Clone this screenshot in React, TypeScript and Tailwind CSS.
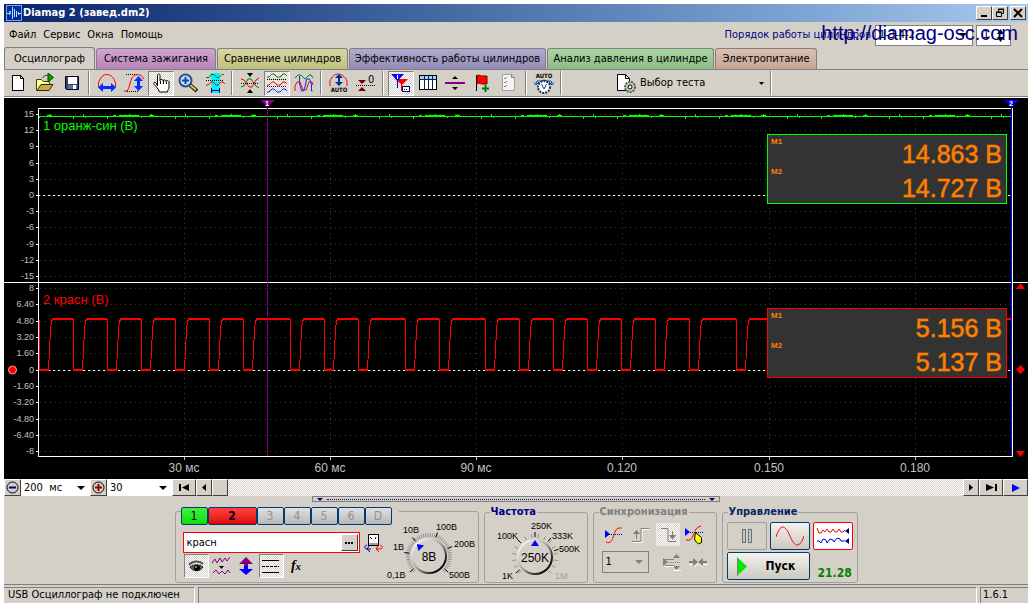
import type { ReactNode } from 'react';

const tabs = [
  { label: 'Осциллограф', style: 'h-[22px] w-[91px] bg-[#d4d0c8] border-b-[#d4d0c8]' },
  { label: 'Система зажигания', style: 'h-[21px] w-[120px] bg-linear-to-b from-[#d0a4d0] to-[#b885b8]' },
  { label: 'Сравнение цилиндров', style: 'h-[21px] w-[131px] bg-linear-to-b from-[#d6d6a6] to-[#c0c07c]' },
  { label: 'Эффективность работы цилиндров', style: 'h-[21px] w-[197px] bg-linear-to-b from-[#b0aacc] to-[#938cb8]' },
  { label: 'Анализ давления в цилиндре', style: 'h-[21px] w-[167px] bg-linear-to-b from-[#aad4a4] to-[#8abc84]' },
  { label: 'Электропитание', style: 'h-[21px] w-[102px] bg-linear-to-b from-[#dcc0b2] to-[#c6a492]' },
];

const pressed = 'bg-[repeating-conic-gradient(#fff_0_25%,#d4d0c8_0_50%)] bg-[length:2px_2px]';
const raised = 'bg-[#d4d0c8] border border-t-white border-l-white border-r-[#404040] border-b-[#404040]';

function Icon({ children, w = 20, h = 20 }: { children: ReactNode; w?: number; h?: number }) {
  return (
    <svg width={w} height={h} viewBox={`0 0 ${w} ${h}`} fill="none" className="shrink-0" aria-hidden="true">
      {children}
    </svg>
  );
}

function ToolButton({ label, active, children }: { label: string; active?: boolean; children: ReactNode }) {
  return (
    <button type="button" aria-label={label} aria-pressed={active} className="flex h-[26px] w-[27px] items-center justify-center">
      {active ? (
        <span className={`flex h-[25px] w-[26px] items-center justify-center border border-t-[#808080] border-l-[#808080] border-r-white border-b-white ${pressed}`}>
          {children}
        </span>
      ) : (
        children
      )}
    </button>
  );
}

function Separator() {
  return (
    <div className="flex w-2 justify-center">
      <div className="h-[24px] w-[2px] border-l border-[#808080] bg-white" />
    </div>
  );
}

function Toolbar() {
  return (
    <div className="flex h-[27px] items-center border-b border-[#808080]">
      <ToolButton label="Новый">
        <Icon>
          <path d="M4.500 2.500h8l3 3v12h-11z" fill="white" stroke="black" shapeRendering="crispEdges" />
          <path d="M12.500 2.500v3h3" stroke="black" />
        </Icon>
      </ToolButton>
      <ToolButton label="Открыть">
        <Icon>
          <path d="M1.500 17.500V6.500h5l2 2h6v3" fill="#ffffa0" stroke="#404000" />
          <path d="M2 17.500l4-6h12l-4 6z" fill="#d0a848" stroke="#302800" />
          <path d="M8 5c1-3 3-3 5-2" stroke="#006000" />
          <path d="M13 0l5.500 4.500-5.500 4.500z" fill="#00a000" stroke="#004000" />
        </Icon>
      </ToolButton>
      <ToolButton label="Сохранить">
        <Icon>
          <path d="M3.500 3.500h13v13h-12l-1-1z" fill="#404858" stroke="#000030" />
          <rect x="6" y="4" width="9" height="7" fill="white" />
          <rect x="6" y="12" width="9" height="4" fill="#5870b0" />
          <rect x="11" y="12" width="3" height="4" fill="white" />
        </Icon>
      </ToolButton>
      <Separator />
      <ToolButton label="Растянуть по времени">
        <Icon>
          <path d="M1.500 14V10C3 5 6 1.500 10 1.500S17 5 18.500 10v4" stroke="red" />
          <path d="M4 14.500h12" stroke="#0030ff" strokeWidth="3" />
          <path d="M6 10v9l-5-4.500zM14 10v9l5-4.500z" fill="#0030ff" />
        </Icon>
      </ToolButton>
      <ToolButton label="Растянуть по амплитуде">
        <Icon>
          <path d="M2 1.500h12M3 18.500h12" stroke="black" strokeDasharray="1 1" />
          <path d="M0 18h3c3-3 2-8 5-13 2-3 5-4 8-3 2 1 3 2 3.500 4" stroke="red" />
          <path d="M14.500 6v10" stroke="#0030ff" strokeWidth="3" />
          <path d="M10 8h9l-4.500-5zM10 13h9l-4.500 5z" fill="#0030ff" />
        </Icon>
      </ToolButton>
      <ToolButton label="Рука" active>
        <Icon>
          <path
            d="M6.500 13V2.500c0-2 2.500-2 2.500 0v5c0-1.500 3-1.500 3 .5 0-1.500 3-1.500 3 .5 0-1.500 3-1 3 .5V14c0 2-1.500 3-1.500 5H8.500c-1-3-3-5-5.500-7.500-1-2 1-3 2-1.500z"
            fill="white"
            stroke="black"
          />
          <path d="M9.500 8v3M12.500 8v3M15.500 9v2" stroke="black" />
        </Icon>
      </ToolButton>
      <ToolButton label="Масштаб">
        <Icon>
          <path d="M12 12l7 6" stroke="#202020" strokeWidth="4" />
          <path d="M12 12l6 5" stroke="#e8c060" strokeWidth="2" />
          <circle cx="7.500" cy="7.500" r="6" fill="#c0e0ff" stroke="#384c80" strokeWidth="2" />
          <path d="M4 7.500h7M7.500 4v7" stroke="#0050a0" strokeWidth="2" />
        </Icon>
      </ToolButton>
      <ToolButton label="Участок">
        <Icon>
          <rect x="6" y="0" width="9" height="20" fill="#00f0ff" />
          <path d="M1 4.500h3l2-3h3l3 3h2l3-3h2" stroke="#008000" />
          <path d="M1 7.500h18" stroke="black" strokeDasharray="1 1" />
          <path d="M1 12h2l3-3h2l3 3h2l3-3h2l2 2" stroke="red" />
          <path d="M6 17.500h9M6.500 15v5M14.500 15v5" stroke="#000080" />
        </Icon>
      </ToolButton>
      <Separator />
      <ToolButton label="Совместить">
        <Icon>
          <path d="M7 0h6l-3 4zM7 20h6l-3-4z" fill="black" />
          <path d="M1 14l3-1 4-7h3l5 7 3 2" stroke="green" />
          <path d="M1 6l3 1 5 7h3l4-7 3-2" stroke="red" />
          <path d="M1 10.500h18" stroke="black" strokeDasharray="1 1" />
        </Icon>
      </ToolButton>
      <ToolButton label="Раздельно" active>
        <Icon>
          <path d="M0 4h2l3-3h2l3 3h3l3-3h2l2 2" stroke="green" />
          <path d="M0 6.500h20M0 13.500h20" stroke="black" strokeDasharray="1 1" />
          <path d="M0 12h2l3-3h2l3 3h3l3-3h2l2 2" stroke="red" />
          <path d="M0 19h2l3-3h2l3 3h3l3-3h2l2 2" stroke="#0030ff" />
        </Icon>
      </ToolButton>
      <ToolButton label="Наложение">
        <Icon>
          <path d="M1 5l3-3h3l4 4 4-4h2l2 3" stroke="green" />
          <path d="M1 18V13L3 9h3l3 8h3l3-8h3l1 3" stroke="red" />
          <path d="M5.500 3v7l2 8h2l2-6 1-6h3l2 5v7h1" stroke="#0030ff" />
        </Icon>
      </ToolButton>
      <Separator />
      <ToolButton label="Авто масштаб">
        <Icon>
          <path d="M1 13V8C3 3 6 1 9 1s7 2 9 7v5" stroke="red" />
          <path d="M10 4v8" stroke="#0030a0" strokeWidth="2" />
          <path d="M6 5h8l-4-4zM6 9h8l-4 4z" fill="#0030a0" />
          <text x="10" y="19" textAnchor="middle" className="fill-black text-[6px] font-bold">AUTO</text>
        </Icon>
      </ToolButton>
      <ToolButton label="Ноль">
        <Icon>
          <path d="M2 7h8l-4 4zM2 18h8l-4-4z" fill="#800000" />
          <path d="M0 12.500h20" stroke="black" strokeDasharray="1 1" />
          <text x="12" y="10" className="fill-black text-[11px]">0</text>
        </Icon>
      </ToolButton>
      <Separator />
      <ToolButton label="Маркеры" active>
        <Icon>
          <path d="M4 6h13l-6 6z" fill="red" />
          <path d="M10.500 10v8" stroke="red" />
          <path d="M0 1h13L6.500 8z" fill="#0000ff" />
          <path d="M6.500 7v8" stroke="#0000ff" />
          <path d="M6.500 2v4" stroke="white" />
          <rect x="11.500" y="13.500" width="7" height="5" fill="white" stroke="#000080" />
          <path d="M13 16.500h4" stroke="#000080" strokeDasharray="1 1" />
        </Icon>
      </ToolButton>
      <ToolButton label="Таблица">
        <Icon>
          <rect x="1.500" y="2.500" width="17" height="14" fill="white" stroke="black" />
          <rect x="2" y="3" width="16" height="3" fill="#a0d0ff" />
          <path d="M1 6.500h18M6.500 3v14M10.500 3v14M14.500 3v14" stroke="#102040" />
        </Icon>
      </ToolButton>
      <ToolButton label="Линия">
        <Icon>
          <path d="M7 6h6l-3-3zM7 14h6l-3 3z" fill="black" />
          <path d="M0 10h20" stroke="purple" strokeWidth="2" />
        </Icon>
      </ToolButton>
      <ToolButton label="Добавить флаг">
        <Icon>
          <path d="M4.500 2v16" stroke="black" />
          <path d="M5 3c2-2 3 0 5 0h5v8h-5c-2 0-3-2-5 0z" fill="red" stroke="#800000" />
          <path d="M13.500 12v7M10 15.500h7" stroke="green" strokeWidth="2" />
        </Icon>
      </ToolButton>
      <ToolButton label="Список">
        <Icon>
          <path d="M3.500 1.500h9l3 3v13h-12z" fill="#f4f4f4" stroke="#a0a0a0" />
          <path d="M12.500 1.500v3h3" stroke="#808080" />
          <path d="M5 5l1 1 2-2M5 9l1 1 2-2M5 13l1 1 2-2" stroke="#808080" />
        </Icon>
      </ToolButton>
      <Separator />
      <ToolButton label="Авто вольтметр">
        <Icon h={24}>
          <text x="10" y="7" textAnchor="middle" className="fill-black text-[6px] font-bold">AUTO</text>
          <path d="M2 13l1-3h4l3-1 3 1h4l1 3M0 11l2 3 3-3M15 11l3 3 2-3" stroke="#0050d0" />
          <circle cx="10" cy="16" r="6" fill="white" stroke="#303030" strokeWidth="2" strokeDasharray="2 1" />
          <path d="M7.500 13l2.500 5 2.500-5" stroke="#0030ff" />
        </Icon>
      </ToolButton>
      <Separator />
      <button type="button" className="ml-[48px] flex h-[26px] w-[154px] items-center gap-[2px] px-[3px]">
        <Icon w={22}>
          <path d="M1.500 1.500h8l4 4v12h-12z" fill="white" stroke="black" />
          <path d="M9.500 1.500v4h4" stroke="black" />
          <circle cx="14" cy="14" r="5" fill="#c8d0c0" stroke="#506050" strokeWidth="2" strokeDasharray="2 1" />
          <circle cx="14" cy="14" r="2" fill="white" stroke="black" />
        </Icon>
        <span>Выбор теста</span>
        <span className="ml-auto"><Icon w={5} h={3}><path d="M0 0h5L2.500 3z" fill="black" /></Icon></span>
      </button>
      <Separator />
    </div>
  );
}

const ch1Labels = [
  ['15', 114], ['12', 130], ['9', 146], ['6', 163], ['3', 179], ['0', 195],
  ['-3', 211], ['-6', 227], ['-9', 244], ['-12', 260], ['-15', 276],
] as const;
const ch2Labels = [
  ['8', 288], ['6.40', 304], ['4.80', 321], ['3.20', 337], ['1.60', 353], ['0', 370],
  ['-1.60', 386], ['-3.20', 402], ['-4.80', 419], ['-6.40', 435], ['-8', 451],
] as const;
const timeLabels = [
  ['30 мс', 184], ['60 мс', 330], ['90 мс', 476], ['0.120', 622], ['0.150', 769], ['0.180', 915],
] as const;

// falling edges of the red channel
const edges = [39, 73, 107, 141, 175, 209, 243, 290, 324, 358, 405, 439, 485, 519, 553, 587, 621, 655, 689, 736];
const squareWave =
  edges
    .map((x, i) => `${i ? 'L' : 'M'}${x}.5 319.500V369.500H${x + 9}.5L${x + 10}.5 350L${x + 11}.5 330L${x + 12}.5 321L${x + 14}.5 319.500`)
    .join('') + 'H1011';
// the flat parts are drawn twice as thick as the edges
const flats = edges.map((x, i) => `M${x} 370h10M${x + 13} 319H${edges[i + 1] ?? 1011}`).join('');

// ripple on the green channel: [offset, top, width, height], repeats every 102 units
const rippleParts = [
  [0, 117, 1, 1], [8, 115, 5, 1], [10, 114, 1, 2], [34, 117, 1, 2], [44, 114, 1, 2], [46, 117, 1, 1],
  [68, 117, 1, 2], [74, 115, 3, 1], [80, 115, 20, 1], [90, 114, 1, 1],
];
const ripple = Array.from({ length: 10 })
  .flatMap((_, i) => rippleParts.map(([dx, y, w, h]) => [39 + i * 102 + dx, y, w, h]))
  .filter(([x, , w]) => x + w < 1011)
  .map(([x, y, w, h]) => `M${x} ${y}h${w}v${h}h-${w}z`)
  .join('');

function Readout({ y, color, values }: { y: number; color: string; values: [string, string] }) {
  return (
    <g>
      <rect x="767.5" y={y + 0.5} width="239" height="69" fill="#333333" stroke={color} shapeRendering="crispEdges" />
      <g fill="#ff8000">
        <text x="771" y={y + 10} className="text-[8px] font-bold">М1</text>
        <text x="771" y={y + 40} className="text-[8px] font-bold">М2</text>
        <g textAnchor="end" stroke="#ff8000" strokeOpacity="0.6" className="text-[25px]">
          <text x="1002" y={y + 29}>{values[0]}</text>
          <text x="1002" y={y + 63}>{values[1]}</text>
        </g>
      </g>
    </g>
  );
}

function Chart() {
  return (
    <svg viewBox="4 98 1024 381" className="block w-full bg-black font-['Liberation_Sans',Arial,sans-serif]">
      <g shapeRendering="crispEdges" fill="none">
        {/* grid */}
        <g stroke="#404010" strokeDasharray="1 4">
          {[...ch1Labels, ...ch2Labels].map(([, y]) => (
            <path key={y} d={`M40 ${y}.5H1011`} />
          ))}
          {timeLabels.map(([, x]) => (
            <path key={x} d={`M${x}.5 113V456`} />
          ))}
        </g>
        <path d="M38 195.500H1011M38 370.500H1011" stroke="white" strokeDasharray="2 3" />
        {[...ch1Labels, ...ch2Labels].map(([, y]) => (
          <path key={y} d={`M36 ${y}.5h3`} stroke="white" />
        ))}
        {timeLabels.map(([, x]) => (
          <path key={x} d={`M${x}.5 457v3`} stroke="#c0c0c0" />
        ))}
        <path d="M4 282.500H1028" stroke="white" />
        <path d="M38.500 456.500V108.500H1012.500V456.500z" stroke="white" />
        <path d="M39 116.500H1011" stroke="#00ff00" />
        <path d={ripple} fill="#00ff00" />
        <path d={squareWave} stroke="red" />
        <path d={flats} stroke="red" strokeWidth="2" />
        <path d="M267.500 107V456" stroke="purple" />
        <path d="M1011.500 106V456" stroke="#0000ff" />
      </g>
      {/* marker handles */}
      <path d="M260 100h15l-7.500 7z" fill="purple" />
      <path d="M1004 100h15l-7.500 7z" fill="#0000ff" />
      <text x="267" y="106" textAnchor="middle" fill="white" className="text-[7px] font-bold">1</text>
      <text x="1011" y="106" textAnchor="middle" fill="white" className="text-[7px] font-bold">2</text>
      <circle cx="12.500" cy="370" r="4" fill="red" stroke="#ffa0a0" />
      <path d="M1020.500 283l4.500 6h-9zM1020.500 457l4.500-6h-9zM1020.500 365l4.500 4.500-4.500 4.500-4.500-4.500z" fill="red" />
      <g fill="#c0c0c0" className="text-[9px]">
        {[...ch1Labels, ...ch2Labels].map(([label, y]) => (
          <text key={y} x="34" y={y + 3} textAnchor="end">{label}</text>
        ))}
      </g>
      <g fill="#c0c0c0" className="text-[12px]">
        {timeLabels.map(([label, x]) => (
          <text key={x} x={x} y="472" textAnchor="middle">{label}</text>
        ))}
      </g>
      <text x="43" y="130" fill="#00ff00" className="text-[13px]">1 оранж-син (В)</text>
      <text x="43" y="304" fill="red" className="text-[13px]">2 красн (В)</text>
      <Readout y={134} color="#00ff00" values={['14.863 В', '14.727 В']} />
      <Readout y={308} color="#ff0000" values={['5.156 В', '5.137 В']} />
    </svg>
  );
}

function RoundButton({ label, plus }: { label: string; plus?: boolean }) {
  return (
    <button type="button" aria-label={label} className={`flex w-[17px] items-center justify-center ${raised}`}>
      <Icon w={13} h={13}>
        <circle cx="6.500" cy="6.500" r="5.500" stroke="black" />
        {plus ? (
          <path d="M3 6.500h7M6.500 3v7" stroke="#900000" strokeWidth="2" />
        ) : (
          <path d="M3 6.500h7" stroke="#000090" strokeWidth="2" />
        )}
      </Icon>
    </button>
  );
}

function Dropdown({ label, value, width, arrow = 'black' }: { label: string; value: string; width: string; arrow?: string }) {
  return (
    <div className={`relative flex items-center ${width}`}>
      <select aria-label={label} defaultValue={value} className="h-full w-full appearance-none bg-transparent px-[3px] text-black">
        <option>{value}</option>
      </select>
      <svg width="8" height="4" className="pointer-events-none absolute right-[5px]" aria-hidden="true">
        <path d="M0 0h8L4 4z" fill={arrow} />
      </svg>
    </div>
  );
}

function ScrollRow() {
  return (
    <div className="flex h-[17px]">
      <RoundButton label="Уменьшить" />
      <Dropdown label="Длительность" value={'200 \u00a0мс'} width="w-[69px] bg-white" />
      <RoundButton label="Увеличить" plus />
      <Dropdown label="Деление" value="30" width="w-[65px] bg-white" />
      <button type="button" aria-label="В начало" className={`flex w-[24px] items-center justify-center ${raised}`}>
        <Icon w={11} h={7}><path d="M0 0h2v7H0zM10 0v7L3 3.500z" fill="black" /></Icon>
      </button>
      <button type="button" aria-label="Назад" className={`flex w-[16px] items-center justify-center ${raised}`}>
        <Icon w={4} h={7}><path d="M4 0v7L0 3.500z" fill="black" /></Icon>
      </button>
      <div className={`flex flex-1 ${pressed}`}>
        <div className={`w-[16px] ${raised}`} />
      </div>
      <button type="button" aria-label="Вперёд" className={`flex w-[16px] items-center justify-center ${raised}`}>
        <Icon w={4} h={7}><path d="M0 0v7l4-3.500z" fill="black" /></Icon>
      </button>
      <button type="button" aria-label="В конец" className={`flex w-[24px] items-center justify-center ${raised}`}>
        <Icon w={11} h={7}><path d="M9 0h2v7H9zM0 0v7l8-3.500z" fill="black" /></Icon>
      </button>
      <button type="button" aria-label="Воспроизвести" className={`flex w-[25px] items-center justify-center ${raised}`}>
        <Icon w={8} h={8}><path d="M0 0v8l8-4z" fill="blue" /></Icon>
      </button>
    </div>
  );
}

// One tick of the dial scale, angle in degrees clockwise from the top.
function tick(cx: number, cy: number, angle: number, from: number, to: number) {
  const a = ((angle - 90) * Math.PI) / 180;
  return `M${cx + Math.cos(a) * from} ${cy + Math.sin(a) * from}L${cx + Math.cos(a) * to} ${cy + Math.sin(a) * to}`;
}

function Knob({ id, x, width, cx, value, minor, major, pointer, labels }: {
  id: string; x: number; width: number; cx: number; value: string; minor: number;
  major: number[]; pointer: number; labels: [string, number, number, string?][];
}) {
  const cy = 556;
  const minors = Array.from({ length: Math.floor(270 / minor) + 1 }, (_, i) => -135 + i * minor);
  return (
    <svg width={width} height="64" viewBox={`${x} 518 ${width} 64`} className="block shrink-0 font-['Liberation_Sans',Arial,sans-serif]">
      <defs>
        <linearGradient id={id} x1="0" y1="0" x2="1" y2="1">
          <stop offset="0.1" stopColor="#ffffff" />
          <stop offset="0.5" stopColor="#a0a0a0" />
          <stop offset="0.8" stopColor="#101010" />
        </linearGradient>
      </defs>
      <path d={minors.map((a) => tick(cx, cy, a, 19, 23)).join('')} stroke="#909090" />
      <path d={major.map((a) => tick(cx, cy, a, 20, 25)).join('')} stroke="black" />
      <circle cx={cx} cy={cy} r="18" fill={`url(#${id})`} />
      <circle cx={cx} cy={cy} r="16" fill="#d4d0c8" />
      <path d={`M${cx} 539l4 6h-8z`} fill="blue" transform={`rotate(${pointer} ${cx} ${cy})`} />
      <text x={cx} y="561" textAnchor="middle" className="text-[12px]">{value}</text>
      {labels.map(([t, lx, ly, color]) => (
        <text key={t} x={lx} y={ly} fill={color ?? 'black'} className="text-[9px]">{t}</text>
      ))}
    </svg>
  );
}

function ChannelButton({ label, style = 'w-[27px] bg-linear-to-b from-[#e0e0e0] to-[#b8b8b8] text-[#909090]' }: { label: string; style?: string }) {
  return (
    <button type="button" className={`h-[18px] rounded-[2px] border border-[#003c74] text-[12px] leading-none ${style}`}>
      {label}
    </button>
  );
}

function SmallButton({ label, active, children }: { label: string; active?: boolean; children: ReactNode }) {
  return (
    <button
      type="button"
      aria-label={label}
      className={`flex h-[24px] w-[25px] items-center justify-center ${active ? `border border-t-[#808080] border-l-[#808080] border-r-white border-b-white ${pressed}` : ''}`}
    >
      {children}
    </button>
  );
}

function ChannelGroup() {
  return (
    <fieldset className="mt-[6px] flex h-[72px] w-[304px] rounded-[3px] border border-[#a0a0a0]">
      <div className="w-[210px] shrink-0 pl-[5px]">
        <div className="-mt-[5px] flex w-[218px] bg-[#d4d0c8]">
          <ChannelButton label="1" style="w-[27px] bg-linear-to-b from-[#40f040] to-[#00e000] text-black" />
          <ChannelButton label="2" style="w-[49px] bg-linear-to-b from-[#ff4040] to-[#e00000] font-bold text-black" />
          <ChannelButton label="3" />
          <ChannelButton label="4" />
          <ChannelButton label="5" />
          <ChannelButton label="6" />
          <ChannelButton label="D" />
        </div>
        <div className="mt-[7px] flex items-center gap-1 pl-[2px]">
          <div className="flex h-[21px] w-[177px] border border-[#ff0000] bg-white">
            <input aria-label="Имя канала" defaultValue="красн" className="min-w-0 flex-1 px-[3px]" />
            <button type="button" className={`m-px flex w-[17px] items-center justify-center ${raised}`} aria-label="Выбрать">
              <Icon w={8} h={2}><path d="M0 1h2M3 1h2M6 1h2" stroke="black" strokeWidth="2" /></Icon>
            </button>
          </div>
          <button type="button" aria-label="Поменять местами">
            <Icon>
              <rect x="4.500" y="1.500" width="10" height="11" fill="white" stroke="black" />
              <path d="M5 11h9" stroke="#a0a0a0" strokeWidth="2" />
              <path d="M6 4l2 2M11 6l1-2" stroke="black" />
              <path d="M3 12c-3 1-3 4 0 4h4M5 13l-2 3 3 3" stroke="#0000a0" />
              <path d="M16 12c3 1 3 4 0 4h-4M14 13l-2 3 3 3" stroke="red" />
            </Icon>
          </button>
        </div>
        <div className="mt-px flex pl-[3px]">
          <SmallButton label="Видимость" active>
            <Icon>
              <path d="M3 9c3-4 10-5 14-1" stroke="#505050" strokeWidth="2" />
              <path d="M4 11c4-3 9-3 13 0-3 5-10 5-13 0z" fill="#606060" stroke="#202020" />
              <circle cx="11" cy="12" r="3" fill="black" />
              <path d="M9 11h2" stroke="white" />
            </Icon>
          </SmallButton>
          <SmallButton label="Фильтр">
            <Icon>
              <path d="M1 7l3-4 2 4 3-5 2 4 3-4 2 3 3-4" stroke="purple" />
              <path d="M8 10h5l-2.500 3z" fill="black" />
              <path d="M2 17l3-3 3 4 3-3 3 3 3-4 2 3" stroke="purple" />
            </Icon>
          </SmallButton>
          <SmallButton label="Инверсия">
            <Icon>
              <path d="M10 1l7 7h-5v3H8V8H3z" fill="purple" />
              <path d="M10 19l7-6h-5v-3H8v3H3z" fill="blue" />
            </Icon>
          </SmallButton>
          <SmallButton label="Линии" active>
            <Icon>
              <path d="M1 4.500h17M1 16.500h17" stroke="black" />
              <path d="M1 10.500h17" stroke="black" strokeDasharray="3 1" />
            </Icon>
          </SmallButton>
          <SmallButton label="Функция">
            <span className="font-['Liberation_Serif',serif] text-[14px] font-bold italic leading-none">f<span className="text-[11px]">x</span></span>
          </SmallButton>
        </div>
      </div>
      <div className="mt-[6px]">
        <Knob
          id="dialVolt"
          x={387}
          width={92}
          cx={430}
          value="8В"
          minor={6}
          major={[-130, -82, -42, 20, 68, 130]}
          pointer={-45}
          labels={[['0,1В', 388, 578], ['1В', 394, 550], ['10В', 404, 533], ['100В', 437, 530], ['200В', 455, 547], ['500В', 450, 578]]}
        />
      </div>
    </fieldset>
  );
}

function Group({ title, width, titleColor, children }: { title: string; width: string; titleColor: string; children: ReactNode }) {
  return (
    <fieldset className={`h-[78px] rounded-[3px] border border-[#a0a0a0] ${width}`}>
      <legend className={`ml-[5px] h-[14px] px-px font-bold ${titleColor}`}>{title}</legend>
      {children}
    </fieldset>
  );
}

function ControlPanel() {
  return (
    <div className="flex h-[82px] justify-center gap-[5px] pt-[3px]">
      <ChannelGroup />
      <Group title="Частота" width="w-[104px]" titleColor="text-[#000080]">
        <Knob
          id="dialRate"
          x={484}
          width={102}
          cx={534}
          value="250K"
          minor={18}
          major={[-130, -45, 0, 40, 72]}
          pointer={0}
          labels={[['250K', 530, 528], ['100K', 496, 538], ['333K', 551, 538], ['500K', 558, 551], ['1K', 501, 578], ['1M', 554, 578, '#a0a0a0']]}
        />
      </Group>
      <Group title="Синхронизация" width="w-[124px]" titleColor="text-[#808080]">
        <div className="flex flex-col gap-[5px] pt-1">
          <div className="flex justify-between px-[8px]">
            <button type="button" aria-label="Уровень" className="flex h-[23px] w-[24px] items-center justify-center">
              <Icon>
                <path d="M1 5v8l5-4z" fill="blue" />
                <path d="M5 9.500h13" stroke="#0000a0" strokeDasharray="1 1" />
                <path d="M2 17c9 4 6-13 13-14h3" stroke="red" />
              </Icon>
            </button>
            <button type="button" aria-label="Фронт" className="flex h-[23px] w-[24px] items-center justify-center">
              <Icon>
                <path d="M2 17.500h9V4.500h7" stroke="white" />
                <path d="M1 16.500h9V3.500h8M5.500 7v7" stroke="#808080" />
                <path d="M2 9h7L5.500 5z" fill="#808080" />
              </Icon>
            </button>
            <button type="button" aria-label="Спад" className={`flex h-[23px] w-[24px] items-center justify-center ${pressed}`}>
              <Icon>
                <path d="M3 3.500h7v13h8M14.500 6v7" stroke="#808080" />
                <path d="M11 10h7l-3.500 5z" fill="#808080" />
              </Icon>
            </button>
            <button type="button" aria-label="Ручная" className="flex h-[23px] w-[24px] items-center justify-center">
              <Icon>
                <path d="M0 3v8l5-4z" fill="blue" />
                <path d="M5 7.500h14" stroke="#0000a0" strokeDasharray="1 1" />
                <path d="M1 15c9 3 6-13 15-14" stroke="red" />
                <path d="M10.500 7.500l6 5v5l-3 1.500-3-3-1-2z" fill="yellow" stroke="black" />
              </Icon>
            </button>
          </div>
          <div className="flex h-[22px] items-center justify-between px-[8px]">
            <Dropdown label="Канал синхронизации" value="1" width="h-[22px] w-[47px] border border-[#808080]" arrow="#808080" />
            <button type="button" aria-label="Смещение" className="ml-[8px]">
              <Icon>
                <path d="M1 6v8l5-4zM11 6h7l-3.500-4zM11 14h7l-3.500 4z" fill="#808080" />
                <path d="M3 7.500h9M3 13.500h9" stroke="#808080" />
                <path d="M5 10.500h13" stroke="#808080" strokeDasharray="1 1" />
                <path d="M3 14.500h9M12 18.500h7" stroke="white" />
              </Icon>
            </button>
            <button type="button" aria-label="По центру">
              <Icon>
                <path d="M1 12.500h4M7 15l4-4M12 12.500l3 3M15 12.500h5" stroke="white" />
                <path d="M1 9h4V6l5 4-5 4v-3H1zM19 9h-4V6l-5 4 5 4v-3h4z" fill="#808080" />
              </Icon>
            </button>
          </div>
        </div>
      </Group>
      <Group title="Управление" width="w-[134px]" titleColor="text-[#0a246a]">
        <div className="flex flex-col gap-[2px] px-[4px] pt-[3px]">
          <div className="flex gap-[3px]">
            <button type="button" aria-label="Пауза" className="flex h-[28px] w-[40px] items-center justify-center rounded-[2px] border border-[#a0a0a0]">
              <Icon w={12} h={16}>
                <rect x="1.500" y="1.500" width="3" height="13" fill="#c0c8c8" stroke="#707070" />
                <rect x="7.500" y="1.500" width="3" height="13" fill="#c0c8c8" stroke="#707070" />
              </Icon>
            </button>
            <button type="button" aria-label="Синус" className="flex h-[28px] w-[40px] items-center justify-center rounded-[2px] border border-[#003c74] bg-linear-to-b from-[#f4f2ee] to-[#ccc8c0]">
              <Icon w={28} h={20}>
                <path d="M0 11C4-2 9-2 14 10s10 12 14 0" stroke="red" />
              </Icon>
            </button>
            <button type="button" aria-label="Сравнение" className="flex h-[28px] w-[40px] items-center justify-center rounded-[2px] border border-[#ff0000] bg-white">
              <Icon w={34} h={20}>
                <path d="M1 2l2 5h2l2-3 2 2 2-3 2 3h2l2-3 2 3h2l2-3 2 3h2l2-2" stroke="red" />
                <path d="M1 15h2l2 2 2-4 3 1 1 3 3-4 3 1 1 2 3-4 3 1 1 2h4" stroke="blue" />
                <path d="M33 2v6l-4-3zM33 12v6l-4-3z" fill="#000080" />
              </Icon>
            </button>
          </div>
          <div className="flex">
            <button type="button" className="flex h-[28px] w-[83px] items-center rounded-[2px] border border-[#003c74] bg-linear-to-b from-[#f4f2ee] to-[#ccc8c0] pl-[9px] text-[12px] font-bold">
              <Icon w={10} h={19}><path d="M0 0v19l10-9.500z" fill="#00e800" /><path d="M.5 19V1" stroke="#808080" /></Icon>
              <span className="ml-[19px]">Пуск</span>
            </button>
            <span className="ml-[8px] self-end text-[12px] font-bold text-[#008000]">21.28</span>
          </div>
        </div>
      </Group>
    </div>
  );
}

function TitleBar() {
  return (
    <div className="flex h-[18px] items-center bg-linear-to-r from-[#0a246a] to-[#a6caf0] px-[2px]">
      <Icon w={16} h={16}>
        <rect x="0.500" y="0.500" width="15" height="15" fill="#0030a0" stroke="#80a0e0" />
        <path d="M1 8.500h3V6v4M6.500 2v12M8.500 4v8M10.500 6v6M12.500 7v3M13 8.500h2" stroke="#c0e0ff" />
      </Icon>
      <h1 className="ml-px font-bold text-white">Diamag 2 (завед.dm2)</h1>
      <div className="ml-auto flex">
        <button type="button" aria-label="Свернуть" className={`flex h-[14px] w-[16px] items-center justify-center ${raised}`}>
          <Icon w={10} h={10}><path d="M2 8h6" stroke="black" strokeWidth="2" /></Icon>
        </button>
        <button type="button" aria-label="Восстановить" className={`flex h-[14px] w-[16px] items-center justify-center ${raised}`}>
          <Icon w={10} h={10}><path d="M3.500 4V1.500h5v4H6M3 1h6M1.500 4.500h5v4h-5zM1 4h6" stroke="black" /></Icon>
        </button>
        <button type="button" aria-label="Закрыть" className={`ml-[2px] flex h-[14px] w-[16px] items-center justify-center ${raised}`}>
          <Icon w={10} h={10}><path d="M1 1l8 8M9 1L1 9" stroke="black" strokeWidth="2" /></Icon>
        </button>
      </div>
    </div>
  );
}

export default function App() {
  return (
    <div className="bg-white px-1 pt-1 pb-[5px] font-['DejaVu_Sans_Condensed','DejaVu_Sans',sans-serif] text-[11px] leading-[14px] text-black">
      <div className="bg-[#d4d0c8]">
        <TitleBar />
        <div className="relative flex h-[26px] items-center pr-[17px]">
          <nav className="flex gap-[7px] pl-[5px]">
            {['Файл', 'Сервис', 'Окна', 'Помощь'].map((m) => (
              <button key={m} type="button">{m}</button>
            ))}
          </nav>
          <label htmlFor="order" className="ml-auto text-[#000080]">Порядок работы цилиндров</label>
          <div className="relative ml-[4px] flex h-[21px] w-[98px] items-center border border-[#808080] bg-white">
            <select id="order" defaultValue="1-3-4-2" className="h-full w-full appearance-none px-[3px]">
              <option>1-3-4-2</option>
            </select>
            <svg width="8" height="4" className="pointer-events-none absolute right-[5px]" aria-hidden="true"><path d="M0 0h8L4 4z" fill="black" /></svg>
          </div>
          <div className="ml-[3px] flex h-[21px] w-[35px] items-center border border-[#808080] bg-white">
            <input aria-label="Цилиндр" defaultValue="1" className="w-[20px] pl-[6px]" />
            <Icon w={7} h={13}><path d="M0 5h7L3.500 0zM0 8h7l-3.500 5z" fill="black" /></Icon>
          </div>
          <a href="http://diamag-osc.com" className="absolute right-[10px] top-0 font-['Liberation_Sans',Arial,sans-serif] text-[20px] leading-[22px] text-[#000080]">
            http://diamag-osc.com
          </a>
        </div>
        <div className="flex h-[22px] items-end gap-px border-b border-[#808080]" role="tablist">
          {tabs.map((t, i) => (
            <button
              key={t.label}
              type="button"
              role="tab"
              aria-selected={i === 0}
              className={`rounded-t-[3px] border border-b-0 border-[#808080] whitespace-nowrap ${t.style}`}
            >
              {t.label}
            </button>
          ))}
        </div>
        <Toolbar />
        <div className="h-px bg-white" />
        <Chart />
        <ScrollRow />
        <div className="flex h-[6px] justify-center">
          <div className="flex w-[408px] items-center justify-between border border-[#808080] px-1">
            <Icon w={6} h={3}><path d="M0 0h6L3 3z" fill="#000080" /></Icon>
            <div className="mx-1 flex-1 border-t border-dotted border-[#000080]" />
            <Icon w={6} h={3}><path d="M0 0h6L3 3z" fill="#000080" /></Icon>
          </div>
        </div>
        <ControlPanel />
        <footer className="flex h-[19px] gap-[3px] border-t border-[#808080] pt-[2px]">
          <div className="w-[191px] border-t border-r border-t-[#808080] border-r-white pl-1">USB Осциллограф не подключен</div>
          <div className="flex-1 border-t border-r border-l border-[#808080] border-r-white" />
          <div className="w-[48px] border-t border-l border-[#808080] pl-[2px]">1.6.1</div>
        </footer>
      </div>
    </div>
  );
}
